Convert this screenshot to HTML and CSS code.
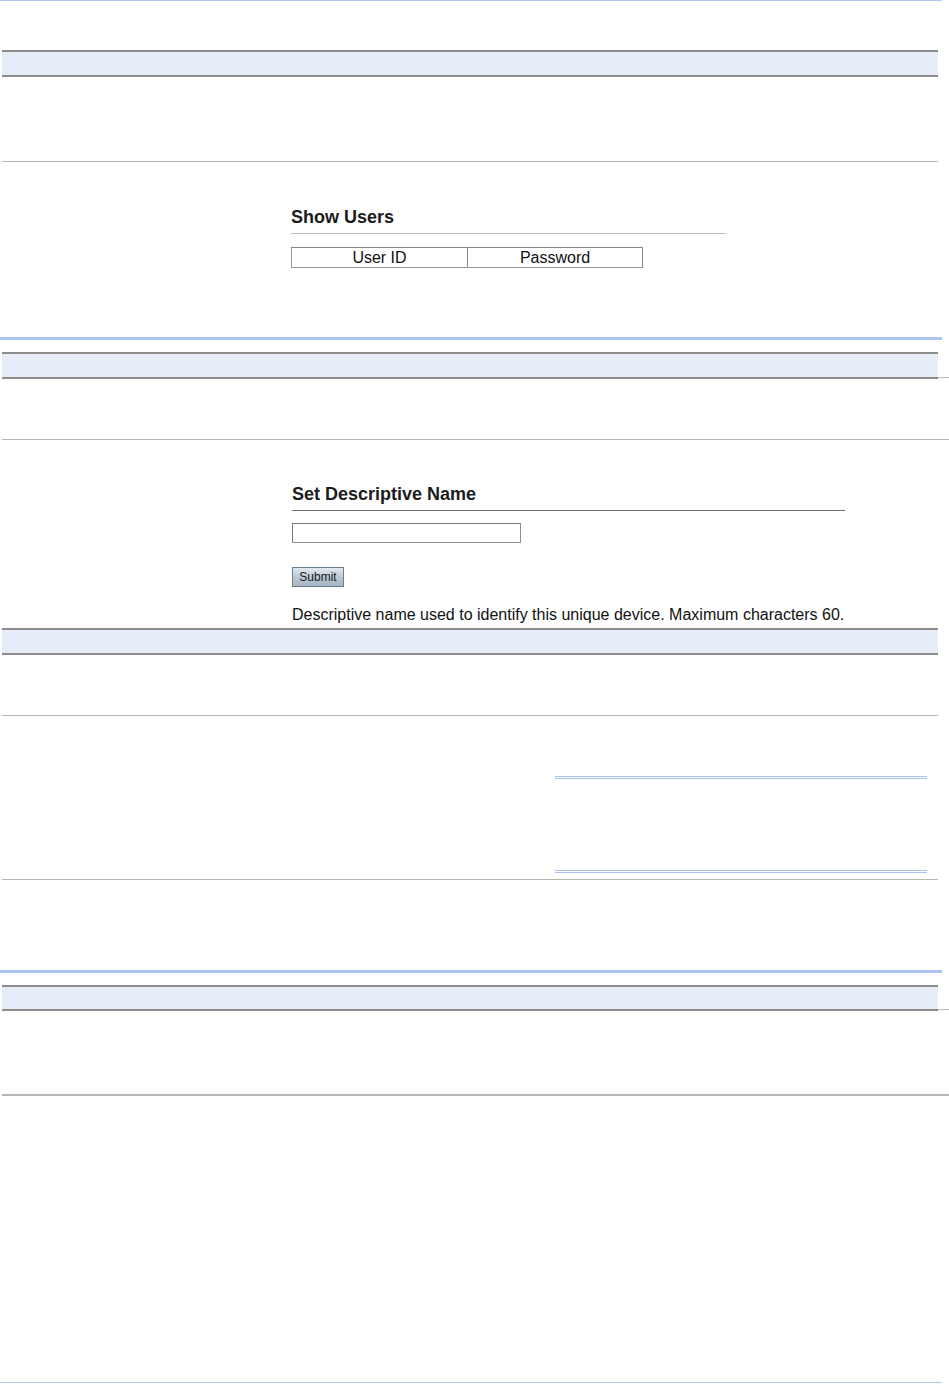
FILE: index.html
```html
<!DOCTYPE html>
<html>
<head>
<meta charset="utf-8">
<link rel="stylesheet" href="styles.css">
</head>
<body>
<div class="page">
  <div class="blue-thin"></div>

  <div class="bar-row first"><div class="bar"></div></div>
  <div class="rule rule-1"></div>

  <div class="panel panel-users">
    <h2 class="panel-title users-title">Show Users</h2>
    <div class="users-grid">
      <div class="cell cell-id">User ID</div>
      <div class="cell cell-pw">Password</div>
    </div>
  </div>

  <div class="blue-thick bt-1"></div>

  <div class="bar-row after-blue"><div class="bar"></div><div class="bar-tail"></div></div>
  <div class="rule rule-wide rule-2"></div>

  <div class="panel panel-name">
    <h2 class="panel-title name-title">Set Descriptive Name</h2>
    <input class="name-input" type="text" aria-label="Descriptive name">
    <button class="submit-btn" type="button">Submit</button>
    <p class="desc">Descriptive name used to identify this unique device. Maximum characters 60.</p>
  </div>

  <div class="bar-row bar-3"><div class="bar"></div></div>
  <div class="rule rule-3"></div>

  <div class="double-box"></div>
  <div class="rule rule-4"></div>

  <div class="blue-thick bt-2"></div>

  <div class="bar-row after-blue"><div class="bar short"></div><div class="bar-tail"></div></div>
  <div class="rule rule-wide rule-thick rule-5"></div>

  <div class="blue-thin bottom"></div>
</div>
</body>
</html>
```

FILE: styles.css
```css
html, body {
  margin: 0;
  padding: 0;
  background: #ffffff;
}

body {
  font-family: "Liberation Sans", Arial, sans-serif;
  color: #1a1a1a;
}

.page {
  width: 949px;
  height: 1384px;
  display: flex;
  flex-direction: column;
  overflow: hidden;
}

.blue-thin {
  width: 942px;
  height: 1px;
  background: #b0c6f2;
  flex: none;
}

.blue-thin.bottom {
  margin-top: 286px;
}

.blue-thick {
  width: 942px;
  height: 3px;
  background: #adc3f1;
  flex: none;
}

.bt-1 { margin-top: 69px; }
.bt-2 { margin-top: 90px; }

.bar-row {
  display: flex;
  align-items: flex-end;
  flex: none;
}

.bar-row.first { margin-top: 49px; }
.bar-row.after-blue { margin-top: 12px; }
.bar-row.bar-3 { margin-top: 4px; }

.bar {
  margin-left: 2px;
  width: 936px;
  height: 23px;
  box-sizing: content-box;
  border-top: 2px solid #8c8c8c;
  border-bottom: 2px solid #8c8c8c;
  background: #e6edf9;
}

.bar.short {
  height: 22px;
}

.bar-tail {
  width: 11px;
  height: 1px;
  margin-bottom: 1px;
  background: #b8b8b8;
}

.rule {
  margin-left: 2px;
  width: 936px;
  height: 1px;
  background: #b6b6b6;
  flex: none;
}

.rule-wide { width: 947px; }
.rule-thick { height: 2px; }

.rule-1 { margin-top: 84px; }
.rule-2 { margin-top: 60px; }
.rule-3 { margin-top: 60px; }
.rule-4 { margin-top: 6px; }
.rule-5 { margin-top: 83px; }

.panel {
  display: flex;
  flex-direction: column;
  align-items: flex-start;
  flex: none;
}

.panel-users { padding-left: 291px; }
.panel-name { padding-left: 292px; }

.panel-title {
  margin: 45px 0 0 0;
  font-size: 18px;
  line-height: 21px;
  font-weight: bold;
  color: #1c1c1c;
}

.users-title {
  width: 435px;
  padding-bottom: 5px;
  border-bottom: 1px solid #bdbdbd;
}

.name-title {
  margin-top: 44px;
  width: 553px;
  padding-bottom: 5px;
  border-bottom: 1px solid #6f6f6f;
}

.users-grid {
  margin-top: 13px;
  display: flex;
  width: 352px;
  box-sizing: border-box;
  border: 1px solid #858585;
  border-bottom-color: #9a9a9a;
  border-left-color: #9a9a9a;
}

.cell {
  font-size: 16px;
  line-height: 18px;
  padding-top: 1px;
  text-align: center;
  color: #111;
}

.cell-id {
  width: 175px;
  flex: none;
}

.cell-pw {
  flex: 1;
  border-left: 1px solid #858585;
}

.name-input {
  margin: 12px 0 0 0;
  width: 229px;
  height: 20px;
  box-sizing: border-box;
  border: 1px solid #8e8e8e;
  border-top-color: #7a7a7a;
  border-left-color: #7a7a7a;
  padding: 0 2px;
  background: #fff;
  font-family: "Liberation Sans", Arial, sans-serif;
  font-size: 13px;
}

.submit-btn {
  margin: 24px 0 0 0;
  width: 52px;
  height: 20px;
  box-sizing: border-box;
  padding: 0;
  border: 1px solid #6b7d8c;
  background: linear-gradient(#e3e9ef, #b9c7d3 55%, #a3b4c2);
  font-family: "Liberation Sans", Arial, sans-serif;
  font-size: 12px;
  line-height: 17px;
  color: #1a1a1a;
}

.desc {
  margin: 18px 0 0 0;
  font-size: 16px;
  line-height: 19px;
  color: #111;
  white-space: nowrap;
}

.double-box {
  margin-top: 60px;
  margin-left: 555px;
  width: 372px;
  height: 97px;
  flex: none;
  background:
    linear-gradient(#a9c0f0, #a9c0f0) left 0 top 0 / 100% 1px no-repeat,
    linear-gradient(#a9c0f0, #a9c0f0) left 0 top 2px / 100% 1px no-repeat,
    linear-gradient(#a9c0f0, #a9c0f0) left 0 bottom 2px / 100% 1px no-repeat,
    linear-gradient(#a9c0f0, #a9c0f0) left 0 bottom 0 / 100% 1px no-repeat;
}
```
